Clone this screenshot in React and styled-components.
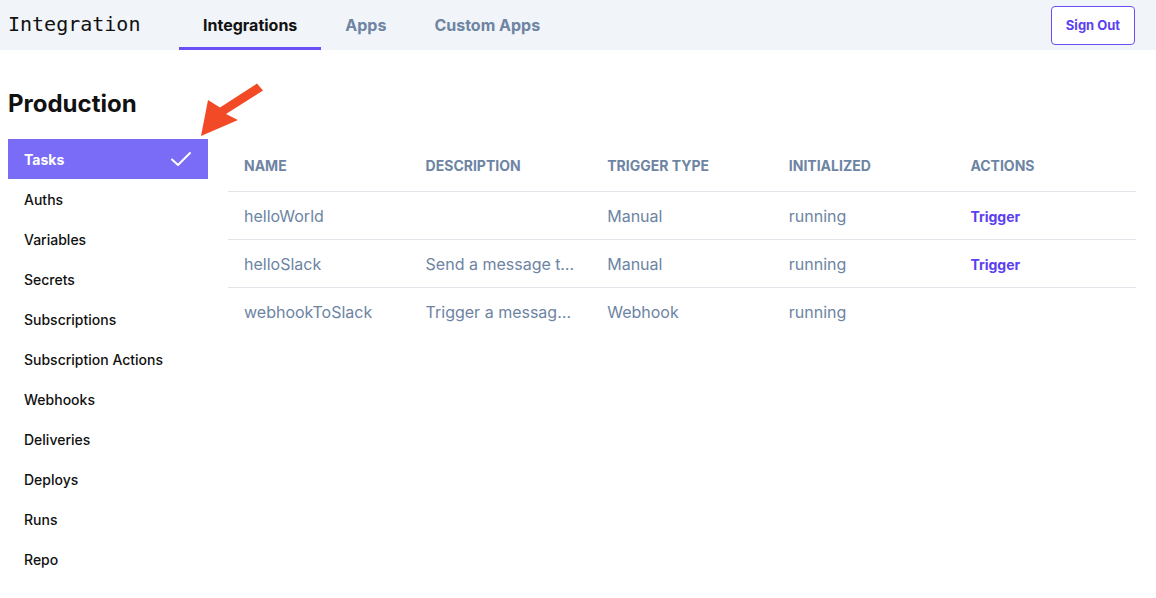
import React from "react";
import styled, { createGlobalStyle } from "styled-components";

const GlobalStyle = createGlobalStyle`
  body {
    margin: 0;
    font-family: Inter, "Noto Sans", sans-serif;
    background: #ffffff;
  }
`;

const Page = styled.div`
  position: relative;
  width: 1156px;
  min-height: 598px;
`;

const Header = styled.header`
  display: flex;
  align-items: center;
  height: 50px;
  background: #f1f4f8;
  padding: 0 21px 0 8px;
`;

const Logo = styled.div`
  font-family: "DejaVu Sans Mono", "Liberation Mono", monospace;
  font-size: 20px;
  color: #111;
  width: 171px;
  margin-top: -2px;
`;

const Tabs = styled.nav`
  display: flex;
  height: 100%;
  flex: 1;
`;

const Tab = styled.a`
  display: flex;
  align-items: center;
  height: 100%;
  box-sizing: border-box;
  padding: 3px 24px 0;
  font-size: 16px;
  font-weight: 700;
  color: ${(p) => (p.active ? "#111" : "#6d84a3")};
  border-bottom: 3px solid ${(p) => (p.active ? "#6a4ff6" : "transparent")};
`;

const SignOut = styled.button`
  width: 84px;
  height: 39px;
  border: 1px solid #6a4ff6;
  border-radius: 4px;
  background: #fff;
  color: #5b3ff2;
  font-family: Inter, sans-serif;
  font-size: 13px;
  font-weight: 700;
`;

const Body = styled.div`
  padding: 37px 20px 0 8px;
`;

const Title = styled.h1`
  margin: 0 0 18px;
  font-size: 24px;
  font-weight: 700;
  color: #111;
  line-height: 34px;
`;

const Main = styled.div`
  display: flex;
  gap: 20px;
`;

const Sidebar = styled.ul`
  list-style: none;
  margin: 0;
  padding: 0;
  width: 200px;
`;

const NavItem = styled.li`
  display: flex;
  align-items: center;
  justify-content: space-between;
  height: 40px;
  padding: 0 16px;
  font-size: 14px;
  font-weight: ${(p) => (p.active ? 700 : 500)};
  color: ${(p) => (p.active ? "#fff" : "#111")};
  background: ${(p) => (p.active ? "#7a6cf6" : "transparent")};
`;

const Table = styled.table`
  width: 908px;
  border-collapse: collapse;
  table-layout: fixed;
  align-self: flex-start;
`;

const Th = styled.th`
  height: 52px;
  padding: 0 16px;
  text-align: left;
  font-size: 14px;
  font-weight: 700;
  color: #6d84a3;
  text-transform: uppercase;
  border-bottom: 1px solid #e2e5e9;
`;

const Row = styled.tr`
  border-bottom: ${(p) => (p.last ? "none" : "1px solid #e2e5e9")};
`;

const Td = styled.td`
  height: 47px;
  padding: 0 16px;
  font-size: 16px;
  color: #6d84a3;
  white-space: nowrap;
  overflow: hidden;
  text-overflow: ellipsis;
`;

const TriggerLink = styled.a`
  font-size: 14px;
  font-weight: 700;
  color: #5b3ff2;
`;

const Pointer = styled.svg`
  position: absolute;
  left: 195px;
  top: 80px;
`;

const navItems = [
  "Tasks",
  "Auths",
  "Variables",
  "Secrets",
  "Subscriptions",
  "Subscription Actions",
  "Webhooks",
  "Deliveries",
  "Deploys",
  "Runs",
  "Repo",
];

const tasks = [
  { name: "helloWorld", desc: "", type: "Manual", init: "running", action: true },
  { name: "helloSlack", desc: "Send a message to Slack", type: "Manual", init: "running", action: true },
  { name: "webhookToSlack", desc: "Trigger a message to Slack", type: "Webhook", init: "running", action: false },
];

const Check = () => (
  <svg width="22" height="16" viewBox="0 0 22 16" fill="none">
    <path d="M2 8.5 L8 14 L20 2" stroke="#fff" strokeWidth="2" strokeLinecap="round" strokeLinejoin="round" />
  </svg>
);

export default function App() {
  return (
    <Page>
      <GlobalStyle />
      <Header>
        <Logo>Integration</Logo>
        <Tabs>
          <Tab active>Integrations</Tab>
          <Tab>Apps</Tab>
          <Tab>Custom Apps</Tab>
        </Tabs>
        <SignOut>Sign Out</SignOut>
      </Header>
      <Body>
        <Title>Production</Title>
        <Main>
          <Sidebar>
            {navItems.map((item, i) => (
              <NavItem key={item} active={i === 0}>
                {item}
                {i === 0 && <Check />}
              </NavItem>
            ))}
          </Sidebar>
          <Table>
            <thead>
              <tr>
                <Th>Name</Th>
                <Th>Description</Th>
                <Th>Trigger Type</Th>
                <Th>Initialized</Th>
                <Th>Actions</Th>
              </tr>
            </thead>
            <tbody>
              {tasks.map((t, i) => (
                <Row key={t.name} last={i === tasks.length - 1}>
                  <Td>{t.name}</Td>
                  <Td>{t.desc}</Td>
                  <Td>{t.type}</Td>
                  <Td>{t.init}</Td>
                  <Td>{t.action && <TriggerLink>Trigger</TriggerLink>}</Td>
                </Row>
              ))}
            </tbody>
          </Table>
        </Main>
      </Body>
      <Pointer width="72" height="60" viewBox="0 0 72 60">
        <polygon
          points="6,56 13,20 25,27.5 62,3.5 68,10.5 31,34 43,40"
          fill="#f24a26"
        />
      </Pointer>
    </Page>
  );
}
